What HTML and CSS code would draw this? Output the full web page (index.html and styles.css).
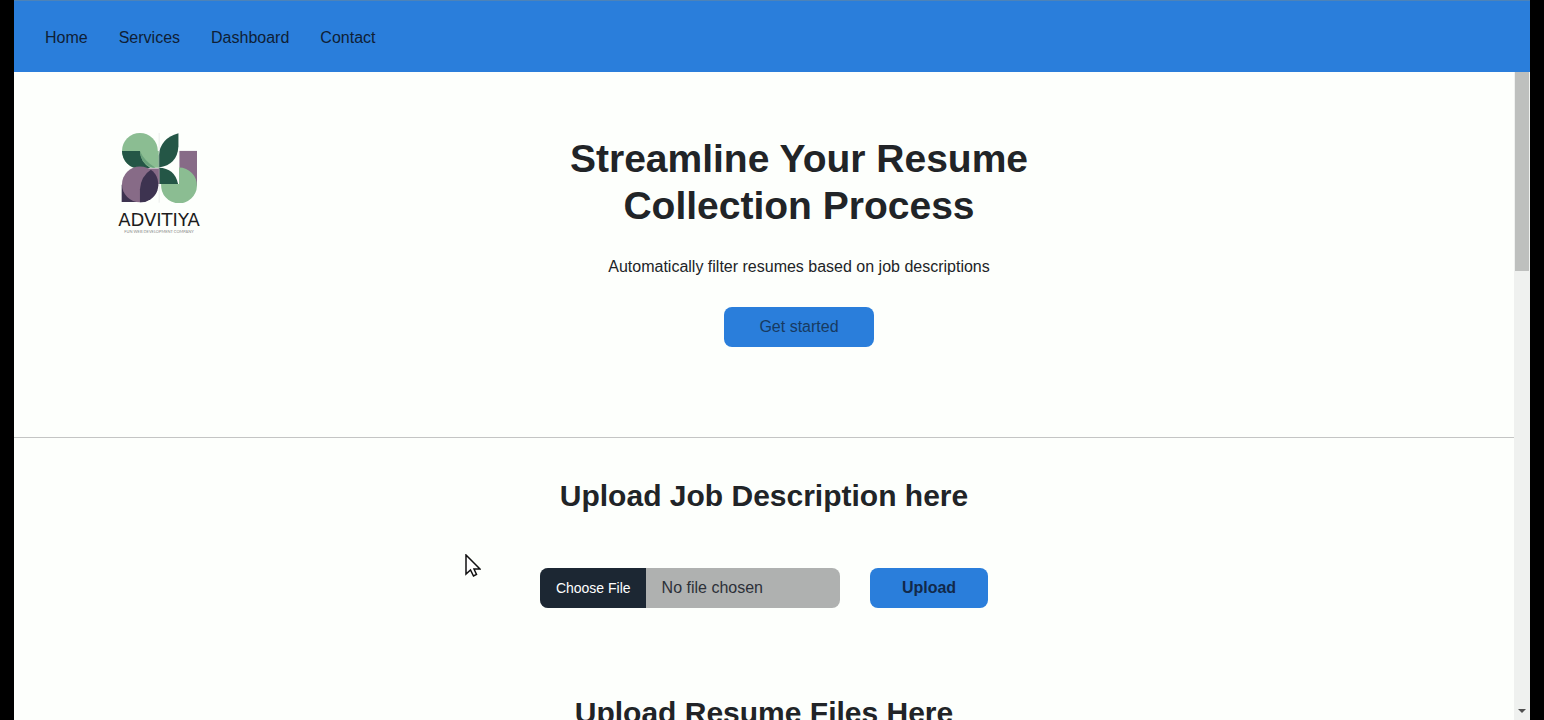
FILE: index.html
```html
<!DOCTYPE html>
<html lang="en">
<head>
<meta charset="utf-8">
<title>Advitiya</title>
<link rel="stylesheet" href="styles.css">
</head>
<body>
<div class="app">
  <header class="navbar">
    <nav class="nav-links">
      <a href="#home">Home</a>
      <a href="#services">Services</a>
      <a href="#dashboard">Dashboard</a>
      <a href="#contact">Contact</a>
    </nav>
  </header>
  <div class="viewport">
    <main class="content">
      <section class="hero" id="home">
        <div class="brand">
          <svg class="brand-mark" viewBox="62 34 232 212" aria-hidden="true">
            <circle cx="119" cy="90" r="54" fill="#8bbd92"/>
            <path d="M119 90H176V141H150Q121 128 119 90Z" fill="#8bbd92"/>
            <path d="M65 90H119Q120 124 150 141Q136 146 118 144A54 54 0 0 1 65 90Z" fill="#245646"/>
            <path d="M119 90Q122 130 158 141H166Q132 120 119 90Z" fill="#6aa27c"/>
            <path d="M176 140V104Q180 52 235 37V76Q232 132 176 140Z" fill="#245646"/>
            <path d="M238 90H291V195H238Z" fill="#876b87"/>
            <path d="M183 190H237V140A54 54 0 1 1 183 190Z" fill="#8bbd92"/>
            <path d="M176 141Q224 142 234 190H176Z" fill="#245646"/>
            <path d="M64 192H120V244H64Z" fill="#3d3350"/>
            <circle cx="119" cy="191" r="54" fill="#876b87"/>
            <path d="M140 143H178V190H160Z" fill="#876b87"/>
            <path d="M152 147A54 54 0 0 1 119 245V206Q122 166 152 147Z" fill="#3d3350"/>
            <path d="M177 36V246" stroke="#c9c9cc" stroke-width="1"/>
          </svg>
          <span class="brand-name">ADVITIYA</span>
          <span class="brand-tag">FUN WEB DEVELOPMENT COMPANY</span>
        </div>
        <div class="hero-text">
          <h1>Streamline Your Resume Collection Process</h1>
          <p>Automatically filter resumes based on job descriptions</p>
          <button class="btn btn-start" type="button">Get started</button>
        </div>
      </section>
      <section class="upload">
        <h2><label for="job-file">Upload Job Description here</label></h2>
        <form class="upload-form">
          <input class="file-input" id="job-file" type="file">
          <button class="btn btn-upload" type="button">Upload</button>
        </form>
      </section>
      <section class="upload">
        <h2>Upload Resume Files Here</h2>
      </section>
    </main>
    <div class="scrollbar" aria-hidden="true">
      <div class="thumb"></div>
      <svg class="arrow" viewBox="0 0 8 4"><path d="M0 0H8L4 4Z" fill="#505050"/></svg>
    </div>
  </div>
</div>
<svg class="cursor" viewBox="0 0 16 24" aria-hidden="true">
  <path d="M1 1V20L5.500 16L8.500 22L11.500 20.500L9 15H15Z" fill="#fff" stroke="#111" stroke-width="1.500"/>
</svg>
</body>
</html>
```
FILE: styles.css
```css
* {
  box-sizing: border-box;
}

body {
  margin: 0;
  background: #000;
  color: #212427;
  font: 16px/24px "Liberation Sans", Arial, sans-serif;
  overflow: hidden;
}

.app {
  display: flex;
  flex-direction: column;
  height: 100vh;
  margin: 0 14px;
  background: #fdfffc;
}

.navbar {
  display: flex;
  flex: none;
  align-items: center;
  padding: 25px 31px 22px;
  border-top: 1px solid #4d83b8;
  background: #2a7edb;
}

.nav-links {
  display: flex;
  gap: 31px;
}

.nav-links a {
  color: #0f2035;
  text-decoration: none;
}

.viewport {
  display: flex;
  flex: 1;
  min-height: 0;
}

.content {
  flex: 1;
  overflow: hidden;
}

.hero {
  display: grid;
  grid-template-columns: 290px 1fr 220px;
  padding: 60px 0 90px;
  border-bottom: 1px solid #c4c5c4;
}

.brand {
  display: flex;
  flex-direction: column;
  align-items: center;
}

.brand-mark {
  width: 77px;
  height: 71px;
}

.brand-name {
  margin-top: 7px;
  color: #1c1c1c;
  font: 18px/20px "DejaVu Sans", sans-serif;
}

.brand-tag {
  color: #8a8a8a;
  font: 4px/4px Lato, sans-serif;
}

.hero-text {
  display: flex;
  flex-direction: column;
  align-items: center;
  text-align: center;
}

h1 {
  max-width: 500px;
  margin: 3px 0 26px;
  font-size: 39px;
  line-height: 47px;
}

p {
  margin: 0 0 28px;
}

.btn {
  height: 40px;
  border: 0;
  border-radius: 8px;
  background: #2a7edb;
  color: #173a61;
  font: 16px "Liberation Sans", Arial, sans-serif;
}

.btn-start {
  padding: 0 35px;
}

.btn-upload {
  padding: 0 32px;
  color: #12294a;
  font-weight: bold;
}

.upload {
  padding: 40px 0;
}

h2 {
  margin: 0 0 55px;
  font-size: 30px;
  line-height: 35px;
  text-align: center;
}

.upload-form {
  display: flex;
  justify-content: center;
  gap: 30px;
  margin-bottom: 7px;
}

.file-input {
  width: 300px;
  height: 40px;
  border-radius: 8px;
  background: #afb1b0;
  color: #2c3038;
  font: 16px/40px "Liberation Sans", Arial, sans-serif;
}

.file-input::file-selector-button {
  height: 40px;
  margin: 0 16px 0 0;
  padding: 0 15px 0 16px;
  border: 0;
  background: #1c2733;
  color: #fff;
  font: 14px "Liberation Sans", Arial, sans-serif;
}

.scrollbar {
  display: flex;
  flex: none;
  flex-direction: column;
  align-items: center;
  justify-content: space-between;
  width: 16px;
  padding: 0 1px 7px;
  background: #eff1ef;
}

.thumb {
  width: 100%;
  height: 31%;
  background: #bec0be;
}

.arrow {
  width: 8px;
  height: 4px;
}

.cursor {
  position: absolute;
  top: 554px;
  left: 465px;
  width: 16px;
  height: 24px;
}
```
